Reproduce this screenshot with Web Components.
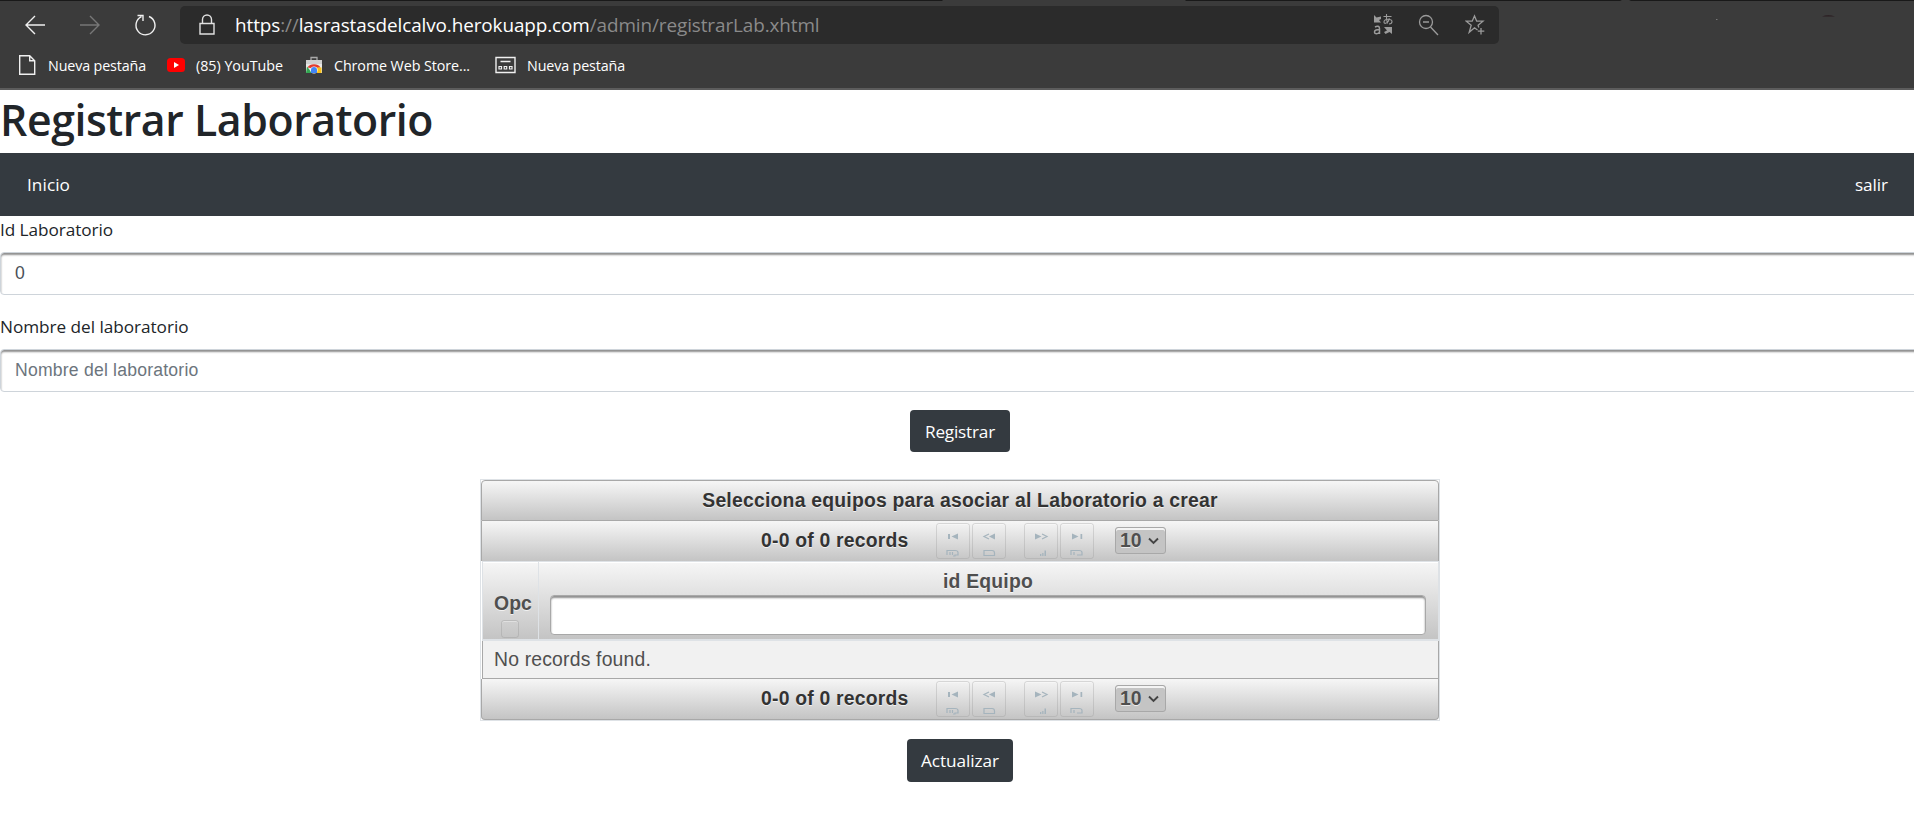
<!DOCTYPE html>
<html lang="es">
<head>
<meta charset="utf-8">
<title>Registrar Laboratorio</title>
<style>
html,body{margin:0;background:#fff;overflow:hidden}
body{font-family:"Open Sans","Noto Sans",sans-serif}
</style>
</head>
<body>
<lab-page></lab-page>
<script>
const define = (name, html, setup) => {
  const tpl = document.createElement('template');
  tpl.innerHTML = html;
  customElements.define(name, class extends HTMLElement {
    connectedCallback() {
      if (this.shadowRoot) return;
      this.attachShadow({mode: 'open'}).append(tpl.content.cloneNode(true));
      if (setup) setup(this);
    }
  });
};

/* A single line of text, tracked so that it spans the width given in "w". */
define('text-run', `<style>:host{display:inline-block;white-space:nowrap}span{display:inline-block}</style><span><slot></slot></span>`, el => {
  const span = el.shadowRoot.querySelector('span');
  const target = +el.getAttribute('w');
  const n = el.textContent.length;
  if (target) {
    const gap = (target - span.getBoundingClientRect().width) / n;
    span.style.letterSpacing = gap.toFixed(4) + 'px';
  }
});

define('address-bar', `<style>
:host{display:flex;align-items:center;box-sizing:border-box;width:1319px;height:38px;margin-left:23px;padding:0 12px 0 18px;background:#2b2b2b;border-radius:5px;color:#8a8a8a;font-size:18.900px}
svg{display:block;flex:none}
.url{display:flex;margin-left:19px;line-height:38px;height:38px}
b{font-weight:400;color:#fff}
.r{margin-left:auto;display:flex;gap:25px}
</style>
<svg width="18" height="22" viewBox="0 0 18 22" fill="none" stroke="#e0e0e0" stroke-width="1.4"><path d="M2 9.5h14v10.5h-14zM4.5 9.5v-4a4.5 4.5 0 0 1 9 0v4"/></svg>
<div class="url"><text-run w="584.500"><b>https</b>://<b>lasrastasdelcalvo.herokuapp.com</b>/admin/registrarLab.xhtml</text-run></div>
<div class="r">
<svg width="20" height="22" viewBox="0 0 20 22" fill="#9b9b9b"><path d="M1 2l2.500 2.500 4.500-1v2.500l-2 1 2 2.500H1zM11 14h8v7l-2.500-2-4 2-1.500-2 3-1.500z"/><g fill="none" stroke="#9b9b9b" stroke-width="1.100"><path d="M10.500 3.500h8M13.500 1c-.3 4 0 7 1 9.500M16.500 5.500c-1 4-5.500 6.500-5.500 3.500s8-4 8-.5c0 2-1.500 2.500-3 2.500"/><path stroke-width="1.500" d="M2 14c2.500-1.500 4.500-.8 4.500 1.500v5.500M6.500 16.500c-3 0-5 .7-5 2.500 0 2.500 4 2 5 0"/></g></svg>
<svg width="22" height="24" viewBox="0 0 22 24" fill="none" stroke="#9b9b9b" stroke-width="1.300"><circle cx="8" cy="9" r="6.500"/><path d="M5 9h6M12.500 14l7.500 8"/></svg>
<svg width="22" height="24" viewBox="0 0 22 24" fill="none" stroke="#9b9b9b" stroke-width="1.300"><path d="M12.500 17l-3-2.200-5.300 4.500 2-7-5-4.100h6L9.500 3l2.200 5.200H18l-4.900 4.100.7 2.200M16 15v6.500M12.800 18.200h6.500"/></svg>
</div>`);

define('bookmark-item', `<style>:host{display:flex;align-items:center;height:24px;color:#fff;font-size:14.300px}::slotted(svg){flex:none;display:block}</style><slot></slot>`);

define('browser-chrome', `<style>
:host{display:block;box-sizing:border-box;height:90px;background:#3b3b3b;border-bottom:2px solid #5c5c5c}
.edge{height:1px;background:linear-gradient(90deg,#191919 942px,#3b3b3b 943px 1185px,#191919 1186px 1620px,#3b3b3b 1622px 1629px,#191919 1631px)}
.nav{display:flex;align-items:center;height:38px;padding:5px 0 0 24px}
.nav>svg{flex:none;display:block}
.smudge{margin:0 0 16px 217px}
.bm{display:flex;height:42px;align-items:center;padding-left:18px}
bookmark-item text-run{margin-left:11px}
</style>
<div class="edge"></div>
<div class="nav">
<svg width="22" height="22" viewBox="0 0 22 22" fill="none" stroke="#f0f0f0" stroke-width="1.400"><path d="M21 11H2M11 2L2 11l9 9"/></svg>
<svg style="margin-left:33px" width="22" height="22" viewBox="0 0 22 22" fill="none" stroke="#777" stroke-width="1.400"><path d="M1 11h19M11 2l9 9-9 9"/></svg>
<svg style="margin-left:33px" width="23" height="22" viewBox="0 0 23 22" fill="none" stroke="#f0f0f0" stroke-width="1.400"><path d="M15 2.500A9.500 9.500 0 1 1 7.500 2.700M3.500 1.500h5.500v5.500"/></svg>
<address-bar></address-bar>
<svg class="smudge" width="120" height="8" viewBox="0 0 120 8"><path d="M0 6h1.500v1H0z" fill="#777"/><path d="M106 3.500q6-2.500 13 0z" fill="#2a1c20"/></svg>
</div>
<div class="bm">
<bookmark-item><svg width="19" height="22" viewBox="0 0 19 22" fill="none" stroke="#f0f0f0" stroke-width="1.400"><path d="M1.700 1.700h10l5 5v13.600h-15zM11.700 1.700v5h5"/></svg><text-run w="98">Nueva pestaña</text-run></bookmark-item>
<bookmark-item style="margin-left:21px"><svg width="18" height="14" viewBox="0 0 18 14"><rect width="18" height="14" rx="3.500" fill="#f00"/><path d="M7 4v6l5-3z" fill="#fff"/></svg><text-run w="87">(85) YouTube</text-run></bookmark-item>
<bookmark-item style="margin-left:22px"><svg width="18" height="18" viewBox="0 0 18 18"><path d="M6 4V1.500h6V4" fill="none" stroke="#aaa" stroke-width="1.300"/><path d="M1 4h16v13H1z" fill="#e8e8e8"/><path d="M1 4h16v4H1z" fill="#d0d0d0"/><path d="M2.500 11.500a7.500 6.500 0 0 1 13 0L9 12.500z" fill="#e33b2e"/><path d="M2 10.500l5 6.500H1z" fill="#34a853"/><path d="M11 11.500h5.500v5.500H10z" fill="#fbc116"/><circle cx="9" cy="14" r="3.600" fill="#fff"/><path d="M6 17v-3a3 3 0 0 1 6 0v3z" fill="#4285f4"/></svg><text-run w="136">Chrome Web Store...</text-run></bookmark-item>
<bookmark-item style="margin-left:25px"><svg width="21" height="18" viewBox="0 0 21 18" fill="none" stroke="#f0f0f0" stroke-width="1.400"><path d="M1 1.500h19v15H1zM5.500 5.500h10"/><path stroke-width="1.200" d="M4 10.500h2.500v2.500H4zM9.200 10.500h2.500v2.500H9.200zM14.500 10.500h2.500v2.500h-2.500z"/></svg><text-run w="98">Nueva pestaña</text-run></bookmark-item>
</div>`);

define('nav-bar', `<style>:host{display:flex;justify-content:space-between;align-items:center;height:63px;padding:0 26px 0 27px;background:#343a40;color:#fff;font-size:17.200px}</style><text-run w="43">Inicio</text-run><text-run w="33">salir</text-run>`);

define('form-field', `<style>
:host{display:block;height:97px}
label{display:block;height:36px;line-height:28px;font-size:17.200px;color:#212529}
.box{box-sizing:border-box;width:1940px;height:43px;border:1px solid #ced4da;border-radius:4px;box-shadow:inset 0 2px 2px #8f8f8f;padding:0 14px;font:17.600px/40px "Liberation Sans",Arial,sans-serif;color:var(--ink,#495057)}
</style><label><slot name="label"></slot></label><div class="box"><slot></slot></div>`);

define('dark-button', `<style>:host{display:flex;align-items:center;justify-content:center;box-sizing:border-box;height:42px;background:#343a40;border-radius:4px;color:#fff;font-size:17.200px}</style><slot></slot>`);

define('page-button', `<style>:host{display:flex;justify-content:center;box-sizing:border-box;width:34px;height:36px;border:1px solid rgba(150,150,150,.3);border-radius:3px;box-shadow:inset 0 1px 0 rgba(255,255,255,.35)}svg{display:block;margin-top:8px}</style>
<svg width="16" height="25" viewBox="0 0 16 25" fill="#a5b4bd"></svg>`, el => {
  const art = {
    first: '<path d="M3 2h2v5H3zM13 1.500v6L6.500 4.500z"/><path d="M2 23v-4.500h8q3 0 3 2v2.500h-3v1h-2M5 20v3M7.500 20v3" fill="none" stroke="#a5b4bd" stroke-width="1.200"/>',
    prev: '<path d="M14 1.500v6L8 4.500z"/><path d="M8 2L3 4.500l5 2.500M3 23.500v-5h8q2.500 0 2.500 2.500v2.500z" fill="none" stroke="#a5b4bd" stroke-width="1.200"/>',
    next: '<path d="M2 1.500v6l6.500-3zM7 22h1.300v2H7zM9.200 21h1.300v3H9.200zM11.500 18.500H13V24h-1.500z"/><path d="M9 2l5 2.500L9 7" fill="none" stroke="#a5b4bd" stroke-width="1.200"/>',
    last: '<path d="M3 1.500v6l6.500-3zM11.500 2h1.700v5h-1.700z"/><path d="M2 23v-4.500h8q3 0 3 2v2.500H8M5 20v3" fill="none" stroke="#a5b4bd" stroke-width="1.200"/>'
  };
  el.shadowRoot.querySelector('svg').innerHTML = art[el.getAttribute('kind')];
});

define('table-paginator', `<style>
:host{display:flex;box-sizing:border-box;align-items:flex-start;height:41px;padding:2px 0 0 279px;font-weight:700;color:#333;text-shadow:0 1px 0 rgba(255,255,255,.7)}
.t{line-height:35px}
.b{display:flex;gap:2px}
.s{display:flex;align-items:center;box-sizing:border-box;width:51px;height:27px;margin:4px 0 0 21px;padding-left:4px;border:1px solid #a8a8a8;border-radius:3px;background:#c4c4c4;box-shadow:inset 0 2px 0 #f4f4f4;color:#4f4f4f}
svg{margin-left:6px}
</style>
<div class="t"><text-run w="147.500">0-0 of 0 records</text-run></div>
<div class="b" style="margin-left:27.500px"><page-button kind="first"></page-button><page-button kind="prev"></page-button></div>
<div class="b" style="margin-left:18px"><page-button kind="next"></page-button><page-button kind="last"></page-button></div>
<div class="s"><text-run w="21.500">10</text-run><svg width="11" height="8" viewBox="0 0 11 8" fill="none" stroke="#444" stroke-width="1.900"><path d="M1 1.500l4.500 4.500L10 1.500"/></svg></div>`);

define('equipment-table', `<style>
:host{display:block;box-sizing:border-box;width:960px;height:242px;border:1px solid #dee2e6;font:19.360px "Liberation Sans",Arial,sans-serif;color:#4f4f4f}
.bar{box-sizing:border-box;border:1px solid #a8a8a8;background:linear-gradient(#f6f6f6,#c4c4c4)}
.title{height:41px;border-radius:4px 4px 0 0;text-align:center;font-weight:700;color:#333;line-height:39px;text-shadow:0 1px 0 rgba(255,255,255,.7)}
.top{display:block;border-width:0 1px;height:40px}
.bot{border-top:0;height:41px;border-radius:0 0 4px 4px}
.head{display:flex;box-sizing:border-box;height:80px;margin-left:1px;border:solid #dee2e6;border-width:1px 1px 2px;background:linear-gradient(#f6f6f6,#c4c4c4);box-shadow:inset 0 1px #fff;font-weight:700;text-shadow:0 1px 0 rgba(255,255,255,.7)}
.opc{display:flex;flex-direction:column;align-items:center;box-sizing:border-box;width:56px;border-right:1px solid #dee2e6;padding:29px 0 0 5px;line-height:24px}
.opc i{box-sizing:border-box;width:18px;height:18px;margin:5px 6px 0 0;border:1px solid rgba(150,150,150,.35);border-radius:3px;box-shadow:inset 0 1px rgba(255,255,255,.35)}
.col{flex:1;text-align:center;line-height:24px;padding:7px 12px 0 11px}
.col div{box-sizing:border-box;height:40px;margin-top:2px;background:#fff;border:1px solid #a8a8a8;border-radius:4px;box-shadow:inset 0 2px 2px #8f8f8f}
.row{box-sizing:border-box;height:38px;margin-left:1px;border:solid #a8a8a8;border-width:0 1px 1px;background:#f1f1f1;padding-left:11px;line-height:37px}
</style>
<div class="bar title"><text-run w="515.500">Selecciona equipos para asociar al Laboratorio a crear</text-run></div>
<div class="bar top"><table-paginator></table-paginator></div>
<div class="head"><div class="opc"><text-run w="38">Opc</text-run><i></i></div><div class="col"><text-run w="90">id Equipo</text-run><div></div></div></div>
<div class="row"><text-run w="157">No records found.</text-run></div>
<div class="bar bot"><table-paginator></table-paginator></div>`);

define('lab-page', `<style>
:host{display:block;width:1914px;height:820px;overflow:hidden;background:#fff}
h1{margin:0;height:63px;font-size:42.800px;line-height:60px;font-weight:600;color:#212529}
.main{display:flex;flex-direction:column;align-items:center;width:1920px;padding-top:0}
</style>
<browser-chrome></browser-chrome>
<h1><text-run w="433">Registrar Laboratorio</text-run></h1>
<nav-bar></nav-bar>
<form-field><text-run slot="label" w="113">Id Laboratorio</text-run><text-run w="9.800">0</text-run></form-field>
<form-field style="--ink:#6c757d"><text-run slot="label" w="188.500">Nombre del laboratorio</text-run><text-run w="183.500">Nombre del laboratorio</text-run></form-field>
<div class="main">
<dark-button style="width:100px"><text-run w="70">Registrar</text-run></dark-button>
<equipment-table style="margin-top:27px"></equipment-table>
<dark-button style="width:106px;height:43px;margin-top:18px"><text-run w="78">Actualizar</text-run></dark-button>
</div>`);
</script>
</body>
</html>
